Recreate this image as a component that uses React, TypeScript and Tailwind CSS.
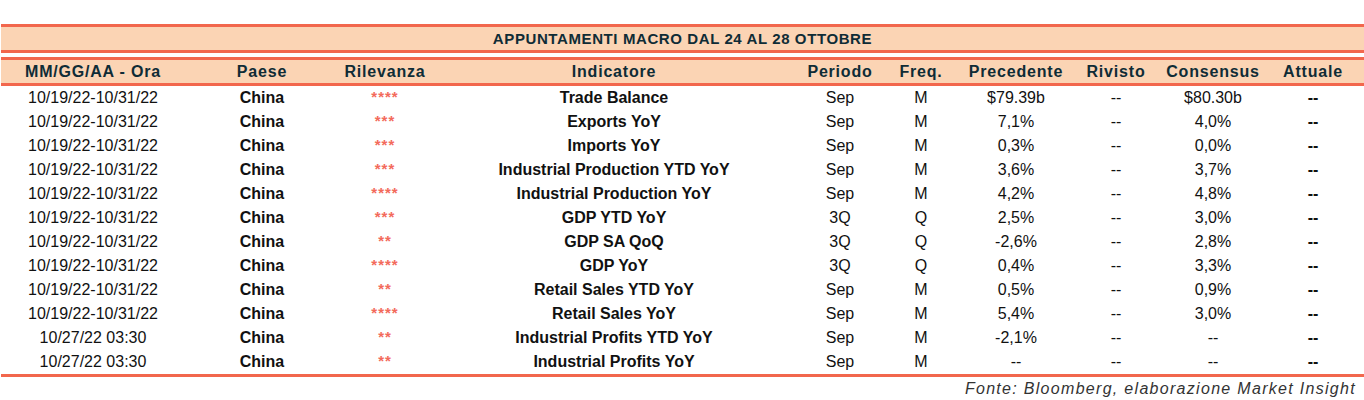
import React from "react";

type Row = {
  date: string;
  stars: string;
  ind: string;
  per: string;
  freq: string;
  prev: string;
  cons: string;
};

const rows: Row[] = [
  { date: "10/19/22-10/31/22", stars: "****", ind: "Trade Balance", per: "Sep", freq: "M", prev: "$79.39b", cons: "$80.30b" },
  { date: "10/19/22-10/31/22", stars: "***", ind: "Exports YoY", per: "Sep", freq: "M", prev: "7,1%", cons: "4,0%" },
  { date: "10/19/22-10/31/22", stars: "***", ind: "Imports YoY", per: "Sep", freq: "M", prev: "0,3%", cons: "0,0%" },
  { date: "10/19/22-10/31/22", stars: "***", ind: "Industrial Production YTD YoY", per: "Sep", freq: "M", prev: "3,6%", cons: "3,7%" },
  { date: "10/19/22-10/31/22", stars: "****", ind: "Industrial Production YoY", per: "Sep", freq: "M", prev: "4,2%", cons: "4,8%" },
  { date: "10/19/22-10/31/22", stars: "***", ind: "GDP YTD YoY", per: "3Q", freq: "Q", prev: "2,5%", cons: "3,0%" },
  { date: "10/19/22-10/31/22", stars: "**", ind: "GDP SA QoQ", per: "3Q", freq: "Q", prev: "-2,6%", cons: "2,8%" },
  { date: "10/19/22-10/31/22", stars: "****", ind: "GDP YoY", per: "3Q", freq: "Q", prev: "0,4%", cons: "3,3%" },
  { date: "10/19/22-10/31/22", stars: "**", ind: "Retail Sales YTD YoY", per: "Sep", freq: "M", prev: "0,5%", cons: "0,9%" },
  { date: "10/19/22-10/31/22", stars: "****", ind: "Retail Sales YoY", per: "Sep", freq: "M", prev: "5,4%", cons: "3,0%" },
  { date: "10/27/22 03:30", stars: "**", ind: "Industrial Profits YTD YoY", per: "Sep", freq: "M", prev: "-2,1%", cons: "--" },
  { date: "10/27/22 03:30", stars: "**", ind: "Industrial Profits YoY", per: "Sep", freq: "M", prev: "--", cons: "--" },
];

const cols = "grid grid-cols-[184px_154px_92px_366px_86px_76px_114px_86px_108px_92px]";

const headers = [
  "MM/GG/AA - Ora",
  "Paese",
  "Rilevanza",
  "Indicatore",
  "Periodo",
  "Freq.",
  "Precedente",
  "Rivisto",
  "Consensus",
  "Attuale",
];

export default function App() {
  return (
    <div
      className="w-[1364px] h-[400px] bg-white pt-[24px] pl-[1px] overflow-hidden"
      style={{ fontFamily: '"Liberation Sans", Arial, sans-serif' }}
    >
      <div className="border-y-[3px] border-[#f2674d] bg-[#fbd4b4] h-[29px] flex items-center justify-center">
        <span className="text-[15px] font-bold tracking-[0.6px] text-[#0f2c36] leading-none">
          APPUNTAMENTI MACRO DAL 24 AL 28 OTTOBRE
        </span>
      </div>
      <div className="mt-[4px] border-y-[3px] border-[#f2674d] bg-[#fbd4b4] h-[29px]">
        <div className={`${cols} h-full items-center`}>
          {headers.map((h) => (
            <div
              key={h}
              className="text-center text-[16px] font-bold tracking-[0.8px] text-[#0f2c36] leading-none"
            >
              {h}
            </div>
          ))}
        </div>
      </div>
      <div className="border-b-[3px] border-[#f2674d]">
        {rows.map((r, i) => (
          <div key={i} className={`${cols} h-[24px] items-center text-[16px] leading-[24px] text-[#111]`}>
            <div className="text-center">{r.date}</div>
            <div className="text-center font-bold">China</div>
            <div className="text-center text-[15px] font-bold tracking-[1px] text-[#f36b5c] leading-[24px] -translate-y-[1px]">{r.stars}</div>
            <div className="text-center font-bold">{r.ind}</div>
            <div className="text-center">{r.per}</div>
            <div className="text-center">{r.freq}</div>
            <div className="text-center">{r.prev}</div>
            <div className="text-center">--</div>
            <div className="text-center">{r.cons}</div>
            <div className="text-center font-bold">--</div>
          </div>
        ))}
      </div>
      <div className="flex justify-end pr-[8px] pt-[2px]">
        <span className="italic text-[16px] tracking-[1.3px] text-[#333] leading-[20px]">
          Fonte: Bloomberg, elaborazione Market Insight
        </span>
      </div>
    </div>
  );
}
